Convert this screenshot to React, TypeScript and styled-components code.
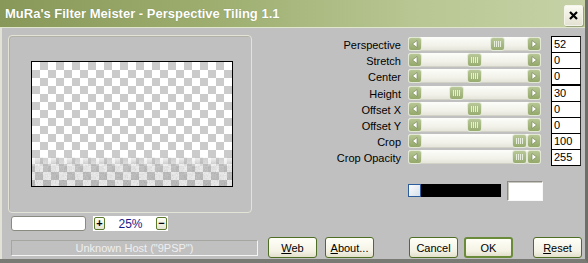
import React from "react";
import styled, { createGlobalStyle } from "styled-components";

// MuRa's Filter Meister dialog, XP olive theme

const GlobalStyle = createGlobalStyle`
  html, body {
    margin: 0;
    padding: 0;
    background: #c0c0c0;
  }
  body {
    font-family: "Liberation Sans", Arial, sans-serif;
    font-size: 11px;
    color: #000;
  }
`;

const Window = styled.div`
  width: 588px;
  height: 263px;
  box-sizing: border-box;
  background: #c0c0c0;
  border-right: 3px solid #6f6f6a;
  border-bottom: 4px solid #7a7a74;
  display: flex;
  flex-direction: column;
  overflow: hidden;
`;

const TitleBar = styled.div`
  height: 27px;
  flex: none;
  display: flex;
  align-items: center;
  justify-content: space-between;
  padding: 0 2px 0 5px;
  background: linear-gradient(to right, #879858 0%, #9cad6e 35%, #b7c692 70%, #c6d2a6 100%);
  border-bottom: 1px solid #dfe6cc;
`;

const Title = styled.span`
  color: #fff;
  font-weight: bold;
  font-size: 13px;
  text-shadow: 0 0 1px rgba(60, 70, 30, 0.35);
`;

const CloseButton = styled.div`
  width: 17px;
  height: 19px;
  margin-top: 3px;
  display: flex;
  align-items: center;
  justify-content: center;
  background: linear-gradient(#fbfbf2, #e4e2d2);
  border: 1px solid #f4f4ea;
  border-radius: 2px;
  box-shadow: 1px 1px 0 #9aa47c;
`;

const Body = styled.div`
  flex: 1;
  display: flex;
  padding-top: 7px;
  border-left: 2px solid #e2e2d6;
`;

const LeftColumn = styled.div`
  width: 256px;
  flex: none;
  display: flex;
  flex-direction: column;
  padding-left: 6px;
  box-sizing: border-box;
`;

const GroupBox = styled.div`
  width: 244px;
  height: 178px;
  box-sizing: border-box;
  border: 1px solid #e4e4d6;
  box-shadow: inset 1px 1px 0 #b2b2a8;
  border-radius: 4px;
  display: flex;
  align-items: center;
  justify-content: center;
  padding-left: 3px;
`;

const PreviewFrame = styled.div`
  width: 200px;
  height: 124px;
  border: 1px solid #000;
  background: #fff;
  line-height: 0;
`;

const ZoomRow = styled.div`
  display: flex;
  align-items: center;
  margin-top: 3px;
  padding-left: 3px;
  height: 15px;
`;

const SizeInput = styled.div`
  width: 73px;
  height: 13px;
  background: #fff;
  border: 1px solid #8a8a80;
  border-radius: 3px;
`;

const ZoomCluster = styled.div`
  margin-left: 7px;
  width: 75px;
  height: 15px;
  background: #fff;
  display: flex;
  align-items: center;
  justify-content: space-between;
  padding: 0 1px;
  box-sizing: border-box;
`;

const TinyButton = styled.div`
  width: 9px;
  height: 11px;
  border: 1px solid #5c7a2e;
  border-radius: 2px;
  background: linear-gradient(#fffff6, #e6e4d2);
  display: flex;
  align-items: center;
  justify-content: center;
  font-weight: bold;
  font-size: 11px;
  line-height: 1;
`;

const ZoomText = styled.span`
  color: #1a1a8a;
  font-size: 12px;
`;

const StatusBox = styled.div`
  margin-top: 9px;
  margin-left: 3px;
  width: 247px;
  height: 16px;
  box-sizing: border-box;
  border: 1px solid;
  border-color: #a6a6a0 #f4f4f4 #f4f4f4 #a6a6a0;
  color: #efefef;
  text-align: center;
  line-height: 14px;
  font-size: 11px;
`;

const RightColumn = styled.div`
  flex: 1;
  display: flex;
  flex-direction: column;
  padding-right: 4px;
`;

const SliderGrid = styled.div`
  display: grid;
  grid-template-columns: 143px 133px 33px;
  grid-auto-rows: 16.2px;
  column-gap: 7px;
  margin-top: 1px;
`;

const Label = styled.div`
  text-align: right;
  align-self: center;
  padding-top: 2px;
  font-size: 11px;
  white-space: nowrap;
`;

const Track = styled.div`
  align-self: center;
  height: 14px;
  display: flex;
  background: linear-gradient(#fdfdfa, #f2f2ea 60%, #e2e2d8);
  border-radius: 3px;
  box-shadow: inset 0 -1px 0 #d2d2c6;
`;

const ArrowButton = styled.div`
  width: 14px;
  height: 14px;
  flex: none;
  box-sizing: border-box;
  border: 1px solid #e2e8d4;
  border-radius: 3px;
  background: linear-gradient(#b6c694, #94a86a);
  display: flex;
  align-items: center;
  justify-content: center;
`;

const Rail = styled.div`
  position: relative;
  flex: 1;
`;

const Thumb = styled.div`
  position: absolute;
  top: 0;
  width: 15px;
  height: 14px;
  box-sizing: border-box;
  border: 1px solid #e4eadb;
  border-radius: 3px;
  background: linear-gradient(#b8c898, #98ac70);
  display: flex;
  align-items: center;
  justify-content: center;
  &::after {
    content: "";
    width: 7px;
    height: 6px;
    background: repeating-linear-gradient(to right, #e8eedc 0 1px, transparent 1px 2px);
  }
`;

const ValueBox = styled.div`
  margin-left: 3px;
  height: 17px;
  box-sizing: border-box;
  background: #fff;
  border: 1px solid #000;
  border-right-color: #333;
  padding-left: 2px;
  font-size: 11px;
  line-height: 15px;
`;

const ColourRow = styled.div`
  display: flex;
  align-items: center;
  margin-top: 15px;
  margin-left: 150px;
  height: 20px;
`;

const Swatch = styled.div`
  width: 11px;
  height: 11px;
  border: 1px solid #2c5c9c;
  background: linear-gradient(135deg, #fafcff, #d8e0ea);
`;

const GradientBar = styled.div`
  width: 80px;
  height: 13px;
  background: #000;
`;

const ColourBox = styled.div`
  margin-left: 6px;
  width: 36px;
  height: 20px;
  box-sizing: border-box;
  background: #fff;
  border: 1px solid;
  border-color: #8c8c84 #f8f8f8 #f8f8f8 #8c8c84;
  box-shadow: inset 1px 1px 0 #c8c8c0;
`;

const ButtonRow = styled.div`
  display: flex;
  margin-top: 36px;
  padding-left: 10px;
`;

const Button = styled.div<{ $default?: boolean; $gap?: number }>`
  width: 49px;
  height: 21px;
  box-sizing: border-box;
  margin-left: ${(p) => p.$gap ?? 0}px;
  border: ${(p) => (p.$default ? "2px" : "1px")} solid ${(p) => (p.$default ? "#6a8c3a" : "#4e6e26")};
  border-radius: 3px;
  background: linear-gradient(#fffff8, #f4f2e4 70%, #e2dfcc);
  display: flex;
  align-items: center;
  justify-content: center;
  font-size: 11px;
  padding-top: 1px;
  u {
    text-decoration: underline;
  }
`;

const sliders = [
  { label: "Perspective", value: 52, min: -100, max: 100 },
  { label: "Stretch", value: 0, min: -100, max: 100 },
  { label: "Center", value: 0, min: -100, max: 100 },
  { label: "Height", value: 30, min: 0, max: 100 },
  { label: "Offset X", value: 0, min: -100, max: 100 },
  { label: "Offset Y", value: 0, min: -100, max: 100 },
  { label: "Crop", value: 100, min: 0, max: 100 },
  { label: "Crop Opacity", value: 255, min: 0, max: 255 },
];

const Arrow = ({ dir }: { dir: "left" | "right" }) => (
  <svg width="8" height="8" viewBox="0 0 8 8">
    {dir === "left" ? (
      <path d="M6 0.5 L1.5 4 L6 7.5 Z" fill="#fff" stroke="#6f7f4c" strokeWidth="0.6" />
    ) : (
      <path d="M2 0.5 L6.5 4 L2 7.5 Z" fill="#fff" stroke="#6f7f4c" strokeWidth="0.6" />
    )}
  </svg>
);

const Slider = ({ value, min, max }: { value: number; min: number; max: number }) => {
  const travel = 105 - 15;
  const left = Math.round(((value - min) / (max - min)) * travel);
  return (
    <Track>
      <ArrowButton>
        <Arrow dir="left" />
      </ArrowButton>
      <Rail>
        <Thumb style={{ left }} />
      </Rail>
      <ArrowButton>
        <Arrow dir="right" />
      </ArrowButton>
    </Track>
  );
};

const Preview = () => (
  <svg width="200" height="124" viewBox="0 0 200 124">
    <defs>
      <pattern id="checker" width="16" height="16" patternUnits="userSpaceOnUse">
        <rect width="16" height="16" fill="#fff" />
        <rect x="8" width="8" height="8" fill="#cbcbcb" />
        <rect y="8" width="8" height="8" fill="#cbcbcb" />
      </pattern>
      <pattern id="tiles" width="16" height="16" patternUnits="userSpaceOnUse" x="3" y="102">
        <rect width="16" height="16" fill="#f0f0f0" />
        <rect x="8" width="8" height="8" fill="#b4b4b4" />
        <rect y="8" width="8" height="8" fill="#b4b4b4" />
      </pattern>
      <filter id="grain" x="0" y="0" width="100%" height="100%">
        <feTurbulence type="fractalNoise" baseFrequency="0.9 0.6" numOctaves="2" seed="4" />
        <feColorMatrix type="saturate" values="0" />
      </filter>
      <linearGradient id="fade" x1="0" y1="0" x2="0" y2="1">
        <stop offset="0" stopColor="#fff" stopOpacity="0.15" />
        <stop offset="0.35" stopColor="#fff" stopOpacity="0.85" />
        <stop offset="1" stopColor="#fff" stopOpacity="1" />
      </linearGradient>
      <mask id="bandMask">
        <rect x="0" y="95" width="200" height="29" fill="url(#fade)" />
      </mask>
    </defs>
    <rect width="200" height="124" fill="url(#checker)" />
    <g mask="url(#bandMask)">
      <rect x="0" y="95" width="200" height="29" fill="url(#tiles)" />
      <rect x="0" y="95" width="200" height="29" filter="url(#grain)" opacity="0.45" />
    </g>
  </svg>
);

export default function App() {
  return (
    <>
      <GlobalStyle />
      <Window>
        <TitleBar>
          <Title>MuRa's Filter Meister - Perspective Tiling 1.1</Title>
          <CloseButton>
            <svg width="9" height="9" viewBox="0 0 9 9">
              <path d="M1 1 L8 8 M8 1 L1 8" stroke="#000" strokeWidth="2.2" />
            </svg>
          </CloseButton>
        </TitleBar>
        <Body>
          <LeftColumn>
            <GroupBox>
              <PreviewFrame>
                <Preview />
              </PreviewFrame>
            </GroupBox>
            <ZoomRow>
              <SizeInput />
              <ZoomCluster>
                <TinyButton>+</TinyButton>
                <ZoomText>25%</ZoomText>
                <TinyButton>−</TinyButton>
              </ZoomCluster>
            </ZoomRow>
            <StatusBox>Unknown Host ("9PSP")</StatusBox>
          </LeftColumn>
          <RightColumn>
            <SliderGrid>
              {sliders.map((s) => (
                <React.Fragment key={s.label}>
                  <Label>{s.label}</Label>
                  <Slider value={s.value} min={s.min} max={s.max} />
                  <ValueBox>{s.value}</ValueBox>
                </React.Fragment>
              ))}
            </SliderGrid>
            <ColourRow>
              <Swatch />
              <GradientBar />
              <ColourBox />
            </ColourRow>
            <ButtonRow>
              <Button>
                <span><u>W</u>eb</span>
              </Button>
              <Button $gap={8}>
                <span><u>A</u>bout...</span>
              </Button>
              <Button $gap={35}>Cancel</Button>
              <Button $gap={6} $default>OK</Button>
              <Button $gap={20}>
                <span><u>R</u>eset</span>
              </Button>
            </ButtonRow>
          </RightColumn>
        </Body>
      </Window>
    </>
  );
}
